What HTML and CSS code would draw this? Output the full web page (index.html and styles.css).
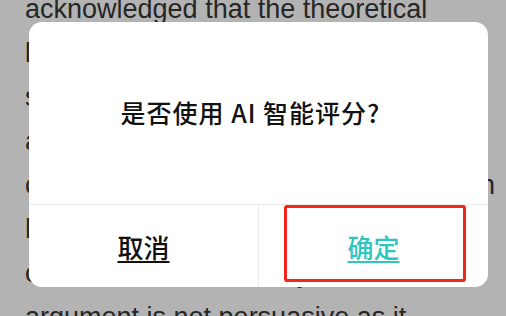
FILE: index.html
```html
<!DOCTYPE html>
<html lang="zh-CN">
<head>
<meta charset="utf-8">
<title>AI 智能评分</title>
<link rel="stylesheet" href="styles.css">
</head>
<body>
<div class="article">
  <div class="line">acknowledged that the theoretical</div>
  <div class="line">knowledge learned in school is</div>
  <div class="line">sometimes far from practice, and</div>
  <div class="line">applying it needs more time and</div>
  <div class="line justify">can be used in a real situation</div>
  <div class="line">however, the author's final</div>
  <div class="line">conclusion is a bit hasty, the</div>
  <div class="line">argument is not persuasive as it</div>
</div>

<div class="mask">
  <div class="dialog">
    <div class="dialog-body">
      <p class="dialog-title">是否使用 AI 智能评分?</p>
    </div>
    <div class="dialog-actions">
      <button class="action cancel">取消</button>
      <button class="action confirm">确定</button>
    </div>
    <div class="highlight"></div>
  </div>
</div>
</body>
</html>
```

FILE: styles.css
```css
html, body {
  margin: 0;
  padding: 0;
  width: 506px;
  height: 316px;
  overflow: hidden;
  background: #b3b3b3;
}

.article {
  padding-left: 25px;
  margin-top: -13px;
  font-family: "Liberation Sans", Arial, sans-serif;
  font-size: 27px;
  line-height: 44px;
  color: #262626;
}

.line {
  white-space: nowrap;
}

.line.justify {
  width: 470px;
  white-space: normal;
  text-align: justify;
  text-align-last: justify;
}

.mask {
  position: absolute;
  inset: 0;
}

.dialog {
  position: absolute;
  left: 29px;
  top: 22px;
  width: 459px;
  height: 265px;
  background: #ffffff;
  border-radius: 13px;
  display: flex;
  flex-direction: column;
  overflow: hidden;
}

.dialog-body {
  height: 182px;
  padding-right: 16px;
  display: flex;
  align-items: center;
  justify-content: center;
  border-bottom: 1px solid #ebebeb;
}

.dialog-title {
  margin: 0;
  margin-top: -2px;
  font-family: "Noto Sans CJK SC", "Noto Sans", sans-serif;
  font-size: 25px;
  font-weight: 500;
  color: #111111;
  letter-spacing: 1px;
}

.dialog-actions {
  flex: 1;
  display: flex;
}

.action {
  flex: 1;
  border: 0;
  background: transparent;
  padding: 0;
  margin: 0;
  font-family: "Noto Sans CJK SC", "Noto Sans", sans-serif;
  font-size: 26px;
  font-weight: 500;
  text-decoration: underline;
  text-underline-offset: 3px;
  text-decoration-thickness: 2px;
}

.cancel {
  color: #111111;
  border-right: 1px solid #ebebeb;
}

.confirm {
  color: #2fc6c0;
}

.highlight {
  position: absolute;
  left: 255px;
  top: 183px;
  width: 176px;
  height: 71px;
  border: 3px solid #f2261d;
  border-radius: 3px;
}
```
